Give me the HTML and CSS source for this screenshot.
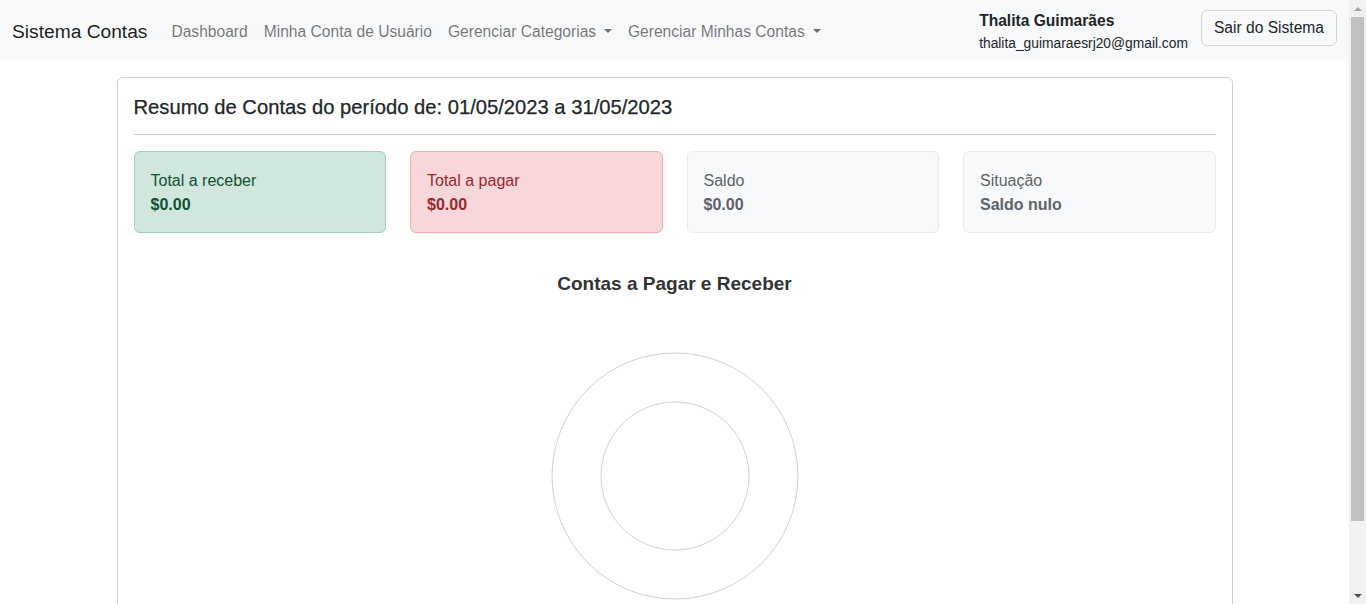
FILE: index.html
```html
<!DOCTYPE html>
<html lang="pt-BR">
<head>
<meta charset="utf-8">
<title>Sistema Contas</title>
<link rel="stylesheet" href="styles.css">
</head>
<body>
<div class="page">
  <nav class="navbar">
    <div class="nav-inner">
      <a class="brand" href="#">Sistema Contas</a>
      <ul class="nav-links">
        <li><a class="nav-link" href="#">Dashboard</a></li>
        <li><a class="nav-link" href="#">Minha Conta de Usuário</a></li>
        <li><a class="nav-link dropdown" href="#">Gerenciar Categorias</a></li>
        <li><a class="nav-link dropdown" href="#">Gerenciar Minhas Contas</a></li>
      </ul>
      <div class="user-area">
        <div class="user-info">
          <div class="user-name">Thalita Guimarães</div>
          <div class="user-email">thalita_guimaraesrj20@gmail.com</div>
        </div>
        <button class="btn-logout" type="button">Sair do Sistema</button>
      </div>
    </div>
  </nav>

  <main class="container">
    <section class="card">
      <h5 class="card-title">Resumo de Contas do período de: 01/05/2023 a 31/05/2023</h5>
      <hr class="divider">
      <div class="summary-row">
        <div class="alert alert-success">
          <div class="alert-label">Total a receber</div>
          <div class="alert-value">$0.00</div>
        </div>
        <div class="alert alert-danger">
          <div class="alert-label">Total a pagar</div>
          <div class="alert-value">$0.00</div>
        </div>
        <div class="alert alert-light">
          <div class="alert-label">Saldo</div>
          <div class="alert-value">$0.00</div>
        </div>
        <div class="alert alert-light">
          <div class="alert-label">Situação</div>
          <div class="alert-value">Saldo nulo</div>
        </div>
      </div>
      <div class="chart">
        <div class="chart-title">Contas a Pagar e Receber</div>
        <svg class="chart-svg" width="260" height="360" viewBox="0 0 260 360">
          <circle cx="130" cy="182" r="123" fill="none" stroke="#d2d2d2" stroke-width="1"/>
          <circle cx="130" cy="182" r="74" fill="none" stroke="#d2d2d2" stroke-width="1"/>
        </svg>
      </div>
    </section>
  </main>
</div>

<div class="scrollbar" aria-hidden="true">
  <div class="sb-btn"><span class="sb-arrow-up"></span></div>
  <div class="sb-track"><div class="sb-thumb"></div></div>
  <div class="sb-btn"><span class="sb-arrow-down"></span></div>
</div>
</body>
</html>
```

FILE: styles.css
```css
* { box-sizing: border-box; }

html {
  overflow: hidden;
}

body {
  margin: 0;
  font-family: "Liberation Sans", Arial, sans-serif;
  font-size: 16px;
  line-height: 1.5;
  color: #212529;
  background: #fff;
  display: flex;
  align-items: flex-start;
}

.page {
  flex: 1;
  min-width: 0;
}

/* fake classic scrollbar */
.scrollbar {
  width: 17px;
  height: 100vh;
  position: sticky;
  top: 0;
  flex: none;
  background: #f1f1f1;
  display: flex;
  flex-direction: column;
}

.sb-btn {
  height: 17px;
  display: flex;
  align-items: center;
  justify-content: center;
  flex: none;
}

.sb-arrow-up {
  width: 0;
  height: 0;
  border-left: 4px solid transparent;
  border-right: 4px solid transparent;
  border-bottom: 4px solid #a3a3a3;
}

.sb-arrow-down {
  width: 0;
  height: 0;
  border-left: 4px solid transparent;
  border-right: 4px solid transparent;
  border-top: 4px solid #505050;
}

.sb-track {
  flex: 1;
  padding: 0 2px;
}

.sb-thumb {
  height: 504px;
  background: #c1c1c1;
}

a { text-decoration: none; }

.navbar {
  background: #f8f9fa;
  height: 61px;
  display: flex;
  align-items: center;
}

.nav-inner {
  width: 100%;
  padding: 0 12px;
  display: flex;
  align-items: center;
}

.brand {
  font-size: 19.2px;
  line-height: 30px;
  color: rgba(0, 0, 0, 0.9);
  margin-right: 16px;
  margin-top: 2px;
}

.nav-links {
  list-style: none;
  margin: 2px 0 0;
  padding: 0;
  display: flex;
}

.nav-link {
  display: block;
  padding: 8px;
  font-size: 15.6px;
  color: rgba(0, 0, 0, 0.55);
}

.nav-link.dropdown::after {
  content: "";
  display: inline-block;
  margin-left: 0.5em;
  vertical-align: 0.255em;
  border-top: 0.3em solid;
  border-right: 0.3em solid transparent;
  border-left: 0.3em solid transparent;
}

.user-area {
  margin-left: auto;
  display: flex;
  align-items: center;
  gap: 13px;
}

.user-info {
  display: flex;
  flex-direction: column;
  padding-top: 1px;
}

.user-name {
  font-weight: 700;
  font-size: 15.6px;
  line-height: 24px;
}

.user-email {
  font-size: 13.8px;
  line-height: 21px;
}

.btn-logout {
  font-family: inherit;
  font-size: 15.6px;
  line-height: 24px;
  padding: 5px 12px;
  color: #212529;
  background: #f8f9fa;
  border: 1px solid #ced4da;
  border-radius: 6px;
  margin-top: -6px;
}

.container {
  max-width: 1140px;
  margin: 16px auto 0;
  padding: 0 12px 9px;
}

.card {
  border: 1px solid rgba(0, 0, 0, 0.175);
  border-radius: 6px;
  padding: 16px;
}

.card-title {
  margin: 0;
  font-size: 20.2px;
  font-weight: 500;
  line-height: 24px;
  padding-top: 1px;
  -webkit-text-stroke: 0.25px #212529;
}

.divider {
  margin: 15px 0 16px;
  border: 0;
  border-top: 1px solid #c8c9ca;
}

.summary-row {
  display: grid;
  grid-template-columns: repeat(4, 1fr);
  gap: 24px;
}

.alert {
  padding: 17px 16px 15px;
  border: 1px solid transparent;
  border-radius: 6px;
  margin-bottom: 16px;
}

.alert-value { font-weight: 700; }

.alert-success {
  background: #d1e7dd;
  border-color: #a3cfbb;
  color: #0f5132;
}

.alert-danger {
  background: #f8d7da;
  border-color: #f1aeb5;
  color: #9b2630;
}

.alert-light {
  background: #f8f9fa;
  border-color: #e9ecef;
  color: #5c636a;
}

.chart {
  display: flex;
  flex-direction: column;
  align-items: center;
  padding-top: 24px;
}

.chart-title {
  font-family: "Liberation Sans", Arial, sans-serif;
  font-weight: 700;
  font-size: 19px;
  line-height: 20px;
  color: #333;
  margin-top: 1px;
}

.chart-svg {
  display: block;
}
```
